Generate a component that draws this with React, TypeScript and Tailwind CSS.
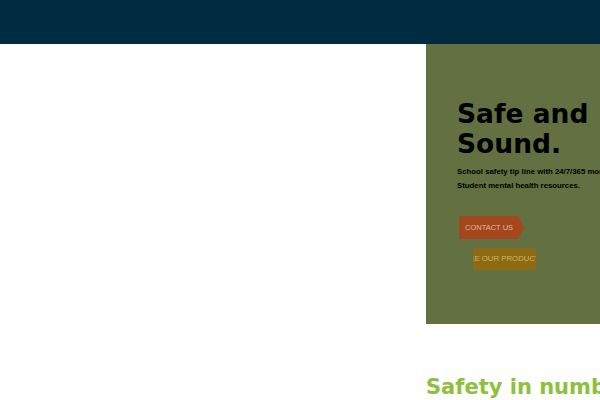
import React from 'react';

const App: React.FC = () => {
  return (
    <div className="w-[600px] h-[400px] overflow-hidden bg-white" style={{ fontFamily: '"DejaVu Sans", sans-serif' }}>
      <div className="h-[44px] bg-[#002c42]" />
      <div className="flex">
        <div className="w-[426px] shrink-0" />
        <div className="w-[320px] h-[280px] shrink-0 bg-[#627042] pl-[31px] pt-[55px]">
          <h1 className="text-[26.5px] leading-[30px] font-bold text-black">
            Safe and
            <br />
            Sound.
          </h1>
          <div className="mt-[6px] text-[7.8px] leading-[14px] font-bold text-black whitespace-nowrap" style={{ fontFamily: '"Liberation Sans", Arial, sans-serif' }}>
            <p>School safety tip line with 24/7/365 monitoring.</p>
            <p>Student mental health resources.</p>
          </div>
          <div className="mt-[23px] flex flex-col items-start gap-[9px]" style={{ fontFamily: '"Liberation Sans", Arial, sans-serif' }}>
            <button className="ml-[2px] h-[23px] w-[65px] pl-[6px] bg-[#a4471d] text-[7.5px] text-[#e2b49a] flex items-center [clip-path:polygon(0_0,91%_0,100%_50%,91%_100%,0_100%)]">
              CONTACT US
            </button>
            <button className="ml-[16px] h-[22px] w-[63px] bg-[#8c6b12] text-[7.8px] text-[#cdb56a] flex items-center justify-center overflow-hidden whitespace-nowrap rounded-[2px]">
              SEE OUR PRODUCTS
            </button>
          </div>
        </div>
      </div>
      <div className="flex">
        <div className="w-[426px] shrink-0" />
        <h2 className="pt-[50px] text-[21px] leading-[26px] font-bold text-[#8dc03c] whitespace-nowrap">Safety in numbers</h2>
      </div>
    </div>
  );
};

export default App;
